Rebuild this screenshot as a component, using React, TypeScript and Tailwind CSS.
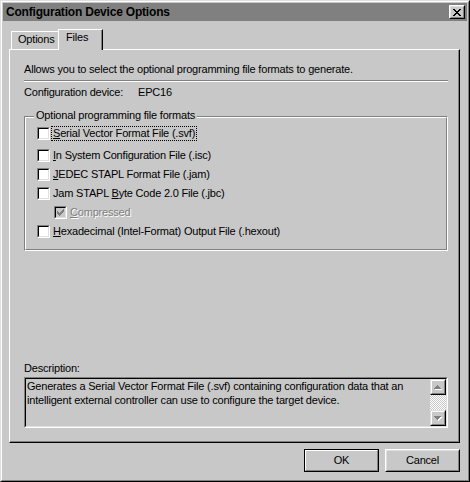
import React from "react";

function CheckMark({ color }: { color: string }) {
  return (
    <svg width="7" height="7" viewBox="0 0 7 7" shapeRendering="crispEdges">
      <path
        d="M0 2h1v3h-1z M1 3h1v3h-1z M2 4h1v3h-1z M3 3h1v3h-1z M4 2h1v3h-1z M5 1h1v3h-1z M6 0h1v3h-1z"
        fill={color}
      />
    </svg>
  );
}

function CheckBox({ checked, disabled }: { checked?: boolean; disabled?: boolean }) {
  return (
    <div className="w-[13px] h-[13px] shrink-0 flex border border-t-[#808080] border-l-[#808080] border-b-white border-r-white">
      <div
        className={`flex-1 flex items-center justify-center border border-t-black border-l-black border-b-[#dfdfdf] border-r-[#dfdfdf] ${
          disabled ? "bg-[#c8c8c8]" : "bg-white"
        }`}
      >
        {checked && <CheckMark color={disabled ? "#808080" : "#000000"} />}
      </div>
    </div>
  );
}

function Arrow({ down }: { down?: boolean }) {
  const up = "M3 0h1v1h-1z M2 1h3v1h-3z M1 2h5v1h-5z M0 3h7v1h-7z";
  const dn = "M0 0h7v1h-7z M1 1h5v1h-5z M2 2h3v1h-3z M3 3h1v1h-1z";
  const d = down ? dn : up;
  return (
    <svg width="8" height="5" viewBox="0 0 8 5" shapeRendering="crispEdges">
      <path d={d} fill="#ffffff" transform="translate(1,1)" />
      <path d={d} fill="#808080" />
    </svg>
  );
}

function ScrollBtn({ down }: { down?: boolean }) {
  return (
    <div className="w-[16px] h-[16px] flex border border-t-[#dfdfdf] border-l-[#dfdfdf] border-b-black border-r-black">
      <div className="flex-1 flex items-center justify-center border border-t-white border-l-white border-b-[#808080] border-r-[#808080] bg-[#c8c8c8]">
        <Arrow down={down} />
      </div>
    </div>
  );
}

function Checker() {
  return (
    <svg width="16" height="15" className="block" shapeRendering="crispEdges">
      <defs>
        <pattern id="chk" width="2" height="2" patternUnits="userSpaceOnUse">
          <rect width="2" height="2" fill="#c8c8c8" />
          <rect width="1" height="1" fill="#ffffff" />
          <rect x="1" y="1" width="1" height="1" fill="#ffffff" />
        </pattern>
      </defs>
      <rect width="16" height="15" fill="url(#chk)" />
    </svg>
  );
}

function Row({
  children,
  checked,
  disabled,
  indent,
  mt,
}: {
  children: React.ReactNode;
  checked?: boolean;
  disabled?: boolean;
  indent?: boolean;
  mt: string;
}) {
  return (
    <div className={`h-[13px] flex items-center gap-[3px] ${mt} ${indent ? "pl-[17px]" : ""}`}>
      <CheckBox checked={checked} disabled={disabled} />
      {children}
    </div>
  );
}

export default function App() {
  return (
    <div className="w-[470px] h-[482px] flex bg-[#c8c8c8] text-[11px] leading-[13px] tracking-[-0.2px] text-black font-['Liberation_Sans',Arial,sans-serif] border border-t-[#dfdfdf] border-l-[#dfdfdf] border-b-black border-r-black">
      <div className="flex-1 flex flex-col border border-t-white border-l-white border-b-[#808080] border-r-[#808080] p-[1px]">
        {/* Title bar */}
        <div className="h-[18px] shrink-0 bg-[#808080] flex items-center pl-[3px] pr-[2px]">
          <span className="font-bold text-[12px] leading-[14px] tracking-[-0.2px] whitespace-nowrap">
            Configuration Device Options
          </span>
          <div className="ml-auto w-[16px] h-[14px] flex border border-t-white border-l-white border-b-black border-r-black">
            <div className="flex-1 flex items-center justify-center border border-t-[#dfdfdf] border-l-[#dfdfdf] border-b-[#808080] border-r-[#808080] bg-[#c8c8c8]">
              <svg width="8" height="7" viewBox="0 0 8 7" shapeRendering="crispEdges">
                <path
                  d="M0 0h2v1h-2z M6 0h2v1h-2z M1 1h2v1h-2z M5 1h2v1h-2z M2 2h4v1h-4z M3 3h2v1h-2z M2 4h4v1h-4z M1 5h2v1h-2z M5 5h2v1h-2z M0 6h2v1h-2z M6 6h2v1h-2z"
                  fill="#000"
                />
              </svg>
            </div>
          </div>
        </div>

        {/* Body */}
        <div className="flex flex-col pl-[6px] pr-[7px] pt-[8px]">
          {/* Tabs */}
          <div className="h-[20px] flex items-end pl-[2px]">
            <div className="w-[49px] h-[18px] border-t border-l border-r border-t-white border-l-white border-r-black shadow-[inset_-1px_0_0_#808080] pl-[6px] pt-[1px] whitespace-nowrap">
              Options
            </div>
            <div className="relative z-10 -ml-[2px] -mb-[1px] w-[45px] h-[21px] bg-[#c8c8c8] border-t border-l border-r border-t-white border-l-white border-r-black shadow-[inset_-1px_0_0_#808080] pl-[7px] pt-[1px] whitespace-nowrap">
              Files
            </div>
          </div>

          {/* Panel */}
          <div className="h-[394px] flex flex-col border border-t-white border-l-white border-b-black border-r-black shadow-[inset_-1px_-1px_0_#808080] pl-[14px] pr-[11px]">
            <div className="mt-[13px] whitespace-nowrap">
              Allows you to select the optional programming file formats to generate.
            </div>
            <div className="mt-[4px] border-t border-b border-t-[#808080] border-b-white" />
            <div className="mt-[4px] flex whitespace-nowrap">
              <span className="w-[114px]">Configuration device:</span>
              <span>EPC16</span>
            </div>

            {/* Group box */}
            <div className="relative mt-[17px] h-[135px] flex border border-t-[#808080] border-l-[#808080] border-b-white border-r-white">
              <div className="flex-1 flex flex-col border border-t-white border-l-white border-b-[#808080] border-r-[#808080] pl-[11px] pt-[9px]">
                <Row mt="">
                  <span className="-ml-[2px] px-[1px] border border-dotted border-black leading-[13px] whitespace-nowrap">
                    <u className="underline-offset-[1px]">S</u>erial Vector Format File (.svf)
                  </span>
                </Row>
                <Row mt="mt-[9px]">
                  <span className="whitespace-nowrap">
                    <u>I</u>n System Configuration File (.isc)
                  </span>
                </Row>
                <Row mt="mt-[6px]">
                  <span className="whitespace-nowrap">
                    <u>J</u>EDEC STAPL Format File (.jam)
                  </span>
                </Row>
                <Row mt="mt-[6px]">
                  <span className="whitespace-nowrap">
                    Jam STAPL <u>B</u>yte Code 2.0 File (.jbc)
                  </span>
                </Row>
                <Row mt="mt-[6px]" indent checked disabled>
                  <span className="whitespace-nowrap text-[#808080] [text-shadow:1px_1px_0_#ffffff]">
                    <u>C</u>ompressed
                  </span>
                </Row>
                <Row mt="mt-[6px]">
                  <span className="whitespace-nowrap">
                    <u>H</u>exadecimal (Intel-Format) Output File (.hexout)
                  </span>
                </Row>
              </div>
              <span className="absolute left-[9px] -top-[8px] px-[2px] bg-[#c8c8c8] whitespace-nowrap">
                Optional programming file formats
              </span>
            </div>

            <div className="mt-[111px] whitespace-nowrap">Description:</div>
            <div className="mt-[2px] h-[51px] flex border border-t-[#808080] border-l-[#808080] border-b-white border-r-white">
              <div className="flex-1 flex border border-t-black border-l-black border-b-[#dfdfdf] border-r-[#dfdfdf]">
                <div className="flex-1 pl-[1px] leading-[14px] whitespace-nowrap">
                  Generates a Serial Vector Format File (.svf) containing configuration data that an
                  <br />
                  intelligent external controller can use to configure the target device.
                </div>
                <div className="w-[16px] flex flex-col">
                  <ScrollBtn />
                  <Checker />
                  <ScrollBtn down />
                </div>
              </div>
            </div>
          </div>

          {/* Buttons */}
          <div className="mt-[6px] flex justify-end gap-[6px]">
            <div className="w-[75px] h-[23px] flex border border-black">
              <div className="flex-1 flex items-center justify-center border border-t-white border-l-white border-b-[#808080] border-r-[#808080]">
                OK
              </div>
            </div>
            <div className="w-[75px] h-[23px] flex border border-t-white border-l-white border-b-black border-r-black">
              <div className="flex-1 flex items-center justify-center border border-t-[#dfdfdf] border-l-[#dfdfdf] border-b-[#808080] border-r-[#808080]">
                Cancel
              </div>
            </div>
          </div>
        </div>
      </div>
    </div>
  );
}
